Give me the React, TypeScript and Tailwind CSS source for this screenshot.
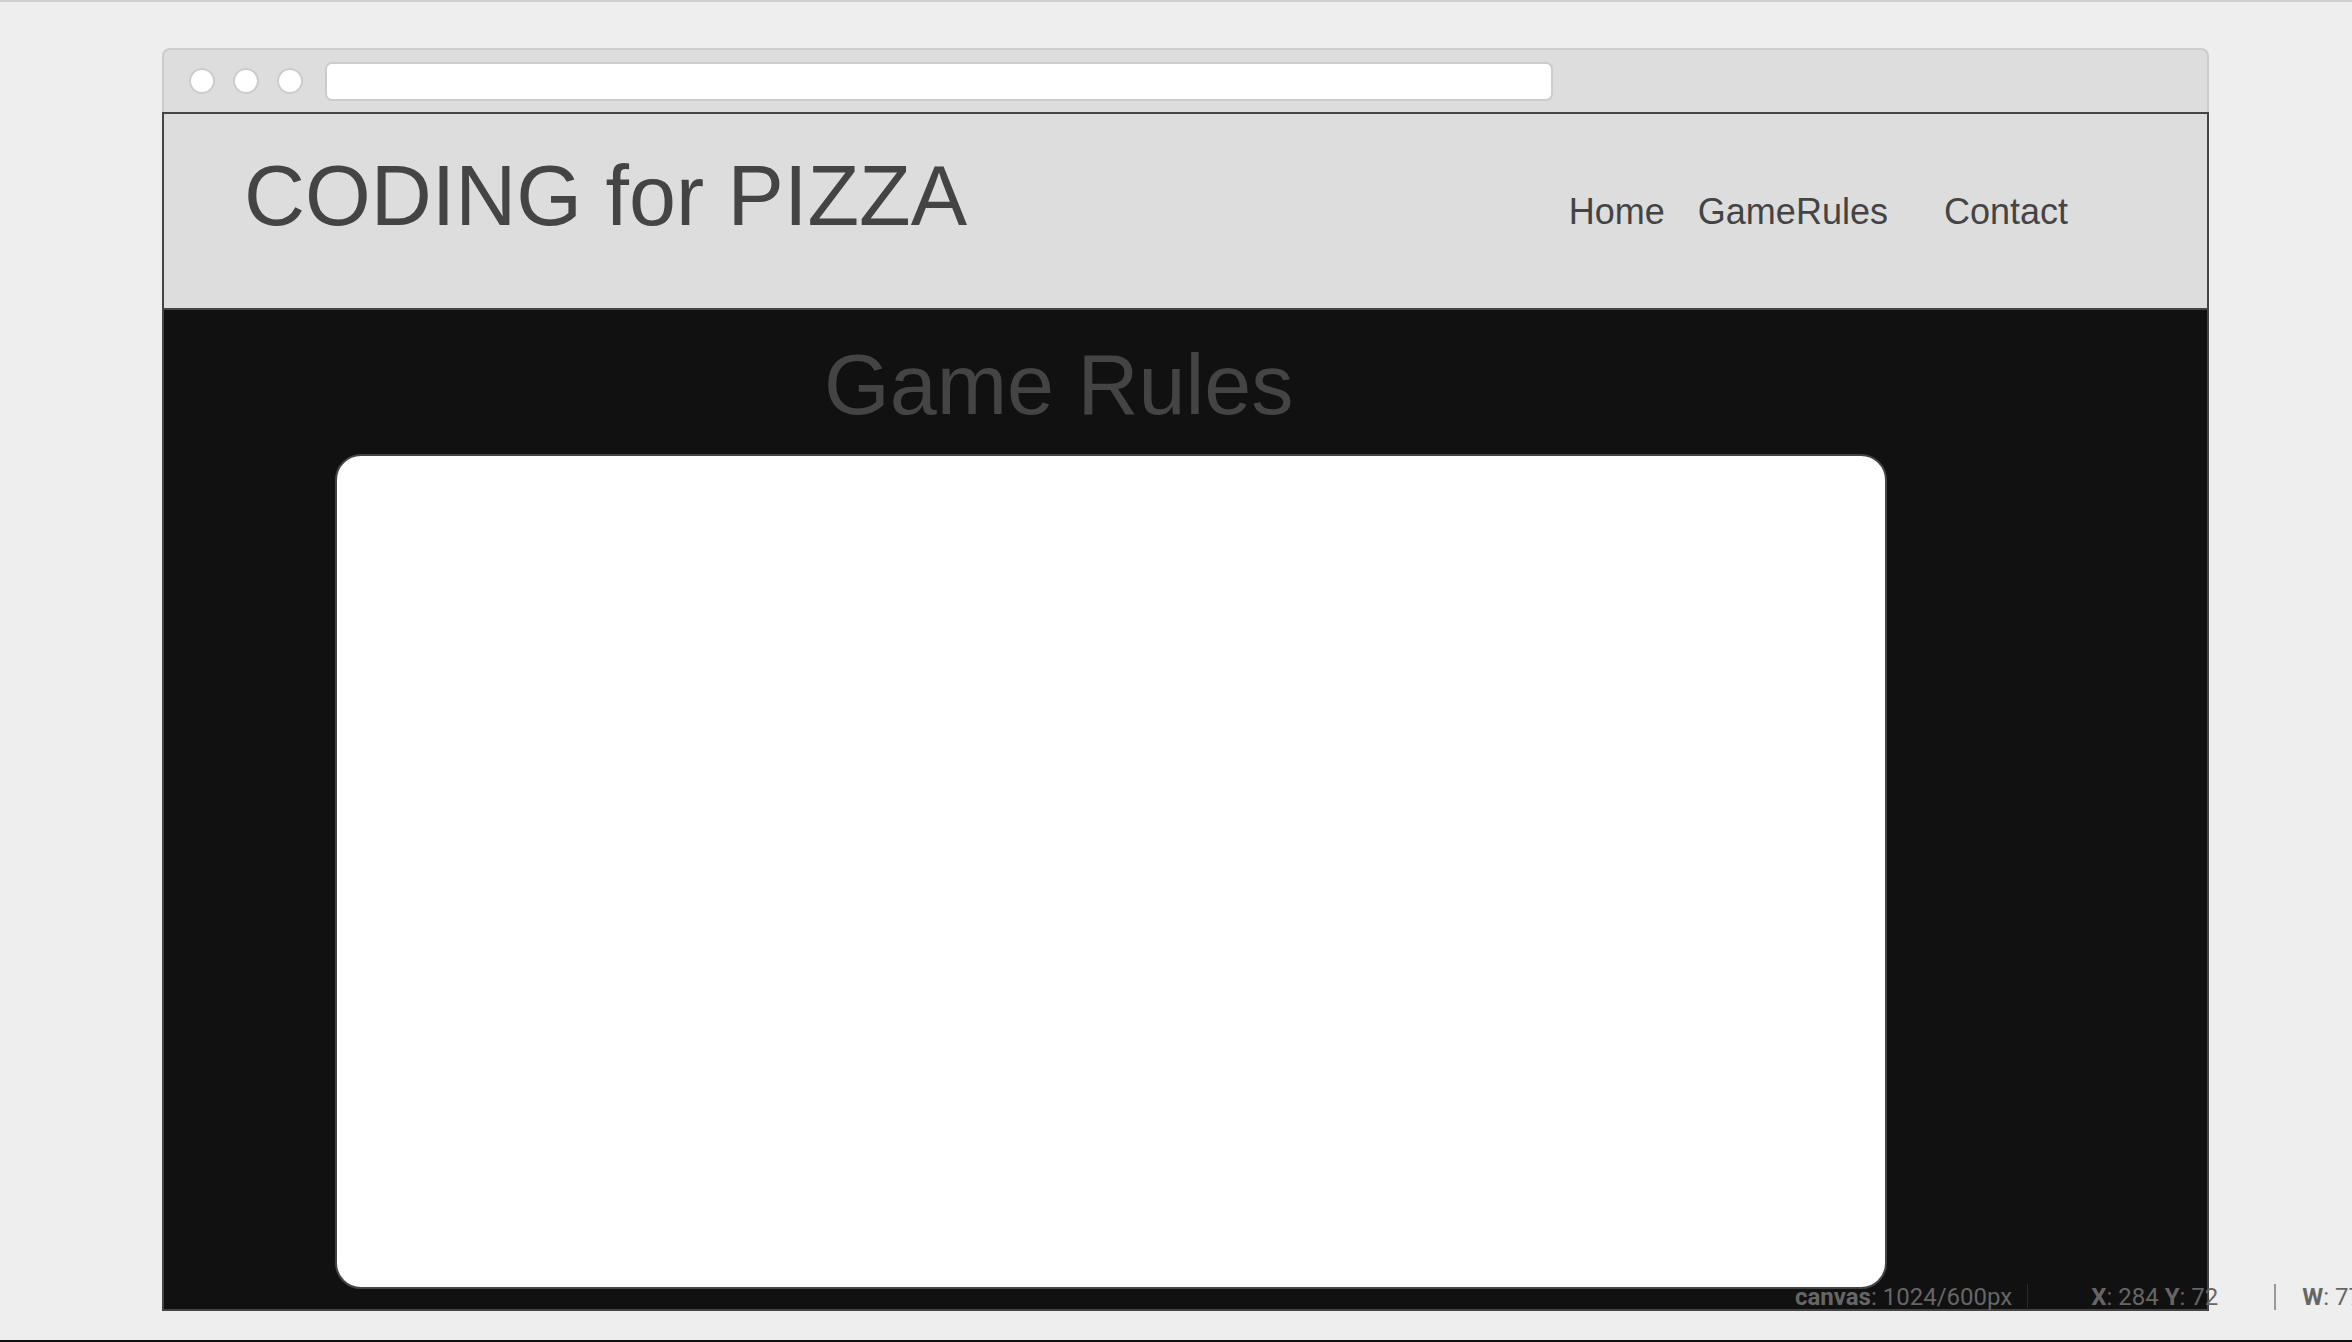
export default function App() {
  const navItems = [
    { label: "Home", className: "" },
    { label: "GameRules", className: "ml-[33px]" },
    { label: "Contact", className: "ml-[56px]" },
  ];

  return (
    <div className="relative w-[2352px] h-[1342px] overflow-hidden bg-[#eeeeee] border-t-2 border-[#cfcfcf] flex flex-col font-['Liberation_Sans',Arial,sans-serif]">
      <div className="pt-[46px] pl-[162px]">
        {/* browser chrome */}
        <div className="w-[2047px] h-[64px] bg-[#dddddd] border-t-2 border-x-2 border-[#cccccc] rounded-t-[8px] flex items-center pl-[25px]">
          <div className="flex items-center gap-[18px]">
            <span className="w-[26px] h-[26px] rounded-full bg-white border-2 border-[#cccccc]" />
            <span className="w-[26px] h-[26px] rounded-full bg-white border-2 border-[#cccccc]" />
            <span className="w-[26px] h-[26px] rounded-full bg-white border-2 border-[#cccccc]" />
          </div>
          <div className="ml-[22px] w-[1228px] h-[39px] bg-white border-2 border-[#cccccc] rounded-[7px]" />
        </div>

        {/* page frame */}
        <div className="w-[2047px] border-2 border-[#444444]">
          <header className="h-[196px] bg-[#dddddd] border-b-2 border-[#444444] flex items-start text-[#444444]">
            <h1 className="ml-[80px] mt-[40px] text-[84.5px] leading-none whitespace-nowrap">CODING for PIZZA</h1>
            <nav className="ml-auto mr-[139px] mt-[80px] flex text-[36px] leading-none">
              {navItems.map((item) => (
                <a key={item.label} className={`whitespace-nowrap ${item.className}`}>
                  {item.label}
                </a>
              ))}
            </nav>
          </header>

          <main className="h-[999px] bg-[#111111] pt-[33px]">
            <h2 className="ml-[660px] text-[84.5px] leading-none text-[#444444] whitespace-nowrap">Game Rules</h2>
            <div className="ml-[171px] mt-[26px] w-[1552px] h-[835px] bg-white border-2 border-[#444444] rounded-[26px]" />
          </main>
        </div>
      </div>

      <div className="mt-auto h-[2px] bg-[#111111]" />

      {/* editor status bar overlay, runs off the right edge as in the screenshot */}
      <div className="absolute left-[1795px] top-[1280px] h-[30px] flex items-center text-[#666666] text-[24px] font-['Roboto',sans-serif] whitespace-nowrap">
        <span>
          <span className="font-bold">canvas</span>: 1024/600px
        </span>
        <span className="ml-[15px] w-px h-[26px] bg-[#2a2a2a]" />
        <span className="ml-[63px]">
          <span className="font-bold">X</span>: 284 <span className="font-bold">Y</span>: 72
        </span>
        <span className="ml-[56px] w-[2px] h-[26px] bg-[#999999]" />
        <span className="ml-[26px]">
          <span className="font-bold">W</span>: 772
        </span>
      </div>
    </div>
  );
}
